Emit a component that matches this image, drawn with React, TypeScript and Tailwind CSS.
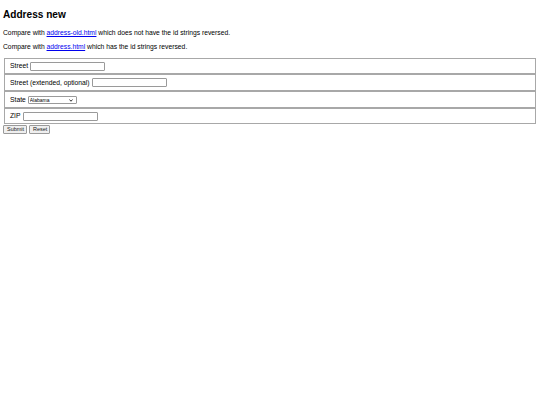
import React from "react";

export default function App() {
  const font = { fontFamily: '"Liberation Sans", Arial, sans-serif' };
  const inputCls =
    "h-[9px] border border-[#9a9a9a] bg-white rounded-[1px] outline-none text-[6px] px-[1px]";
  const btnCls =
    "h-[9px] px-[3px] border border-[#9a9a9a] bg-[#efefef] rounded-[1px] text-[5.5px] leading-[7px] text-[#222]";
  return (
    <div className="w-[540px] h-[405px] bg-white text-black text-[6.75px] leading-[8px]" style={font}>
      <div className="pl-[3px] pt-[9px]">
        <h1 className="text-[10.1px] leading-[12px] font-bold">Address new</h1>
        <p className="mt-[8px]">
          Compare with{" "}
          <a href="#" className="text-[#0000ee] underline">
            address-old.html
          </a>{" "}
          which does not have the id strings reversed.
        </p>
        <p className="mt-[6px]">
          Compare with{" "}
          <a href="#" className="text-[#0000ee] underline">
            address.html
          </a>{" "}
          which has the id strings reversed.
        </p>
      </div>
      <form className="mt-[7px] pl-[3px]" onSubmit={(e) => e.preventDefault()}>
        <div className="mx-[1px] w-[532px] flex flex-col">
          <div className="h-[16px] border border-[#a8a8a8] flex items-center pl-[5px] gap-[2px]">
            <span>Street</span>
            <input className={`${inputCls} w-[75px]`} />
          </div>
          <div className="h-[17px] border border-[#a8a8a8] flex items-center pl-[5px] gap-[2px]">
            <span>Street (extended, optional)</span>
            <input className={`${inputCls} w-[75px]`} />
          </div>
          <div className="h-[17px] border border-[#a8a8a8] flex items-center pl-[5px] gap-[2px]">
            <span>State</span>
            <div className="relative h-[8px] w-[49px] border border-[#9a9a9a] rounded-[1px] bg-white flex items-center">
              <select className="appearance-none w-full h-full bg-transparent text-[5px] leading-[6px] p-0 pl-[1px] outline-none">
                <option>Alabama</option>
              </select>
              <svg className="absolute right-[3px] top-[2px] pointer-events-none" width="4" height="3" viewBox="0 0 8 6">
                <path d="M1 1 L4 4.5 L7 1" fill="none" stroke="#222" strokeWidth="1.8" />
              </svg>
            </div>
          </div>
          <div className="h-[16px] border border-[#a8a8a8] flex items-center pl-[5px] gap-[2px]">
            <span>ZIP</span>
            <input className={`${inputCls} w-[75px]`} />
          </div>
        </div>
        <div className="flex gap-[2px] mt-[1px]">
          <button type="submit" className={`${btnCls} w-[24px]`}>
            Submit
          </button>
          <button type="reset" className={`${btnCls} w-[21px]`}>
            Reset
          </button>
        </div>
      </form>
    </div>
  );
}
